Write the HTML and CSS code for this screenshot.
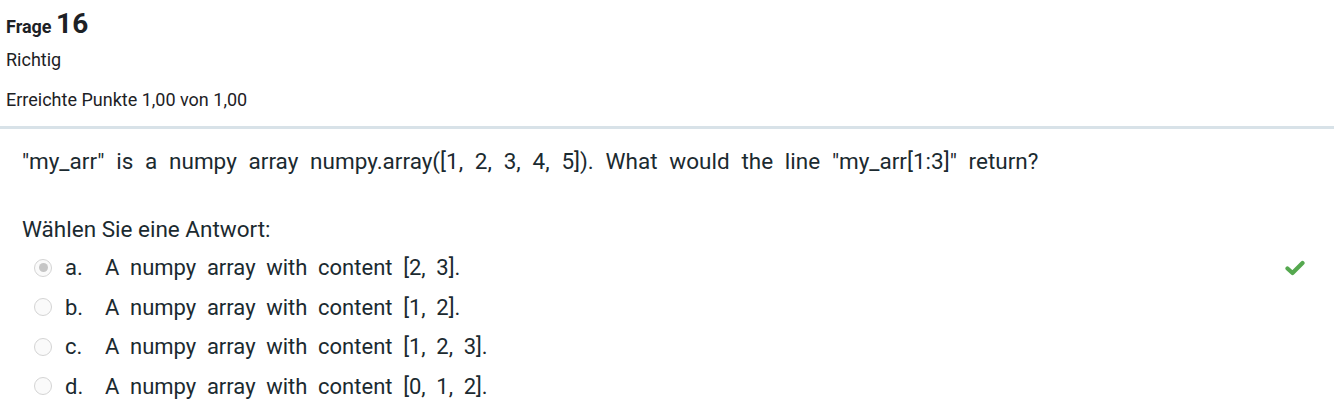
FILE: index.html
```html
<!DOCTYPE html>
<html lang="de">
<head>
<meta charset="utf-8">
<link rel="stylesheet" href="styles.css">
</head>
<body>
<div class="que">
  <div class="info">
    <h3 class="no">Frage <span class="qno">16</span></h3>
    <div class="state">Richtig</div>
    <div class="grade">Erreichte Punkte 1,00 von 1,00</div>
  </div>
  <div class="content">
    <div class="qtext">"my_arr" is a numpy array numpy.array([1, 2, 3, 4, 5]). What would the line "my_arr[1:3]" return?</div>
    <div class="prompt">Wählen Sie eine Antwort:</div>
    <div class="answer">
      <div class="opt">
        <span class="radio checked"></span>
        <span class="letter">a.</span>
        <span class="text">A numpy array with content [2, 3].</span>
        <svg class="check" viewBox="0 0 20 16" width="20" height="16"><path d="M2.5 8.5 L7.5 13 L17.5 3" fill="none" stroke="#55a84f" stroke-width="4.2" stroke-linecap="round" stroke-linejoin="round"/></svg>
      </div>
      <div class="opt">
        <span class="radio"></span>
        <span class="letter">b.</span>
        <span class="text">A numpy array with content [1, 2].</span>
      </div>
      <div class="opt">
        <span class="radio"></span>
        <span class="letter">c.</span>
        <span class="text">A numpy array with content [1, 2, 3].</span>
      </div>
      <div class="opt">
        <span class="radio"></span>
        <span class="letter">d.</span>
        <span class="text">A numpy array with content [0, 1, 2].</span>
      </div>
    </div>
  </div>
</div>
</body>
</html>
```
FILE: styles.css
```css
html, body {
  margin: 0;
  padding: 0;
  background: #ffffff;
}
body {
  font-family: Roboto, "Liberation Sans", sans-serif;
  color: #1d2125;
}
.info {
  padding: 8px 6px 0 6px;
  height: 129px;
  box-sizing: border-box;
  border-bottom: 3px solid #d8e2e8;
}
.no {
  margin: 0;
  font-size: 18px;
  font-weight: 700;
  line-height: 32px;
  height: 34px;
}
.qno {
  font-size: 28px;
}
.state {
  font-size: 18px;
  line-height: 22px;
  margin-top: 7px;
}
.grade {
  font-size: 18px;
  line-height: 22px;
  margin-top: 18px;
}
.content {
  padding: 17px 29px 0 22px;
  color: #1b2a30;
}
.qtext {
  font-size: 22.5px;
  line-height: 30px;
  word-spacing: 6.2px;
}
.prompt {
  font-size: 22.5px;
  line-height: 30px;
  margin-top: 38px;
}
.answer {
  margin-top: 4px;
}
.opt {
  display: flex;
  align-items: center;
  height: 39.5px;
  font-size: 22px;
}
.radio {
  width: 18px;
  height: 18px;
  box-sizing: border-box;
  border: 1px solid #d4d4d4;
  border-radius: 50%;
  background: #fafafa;
  margin-left: 12px;
  margin-right: 13px;
  position: relative;
}
.radio.checked::after {
  content: "";
  position: absolute;
  left: 3.5px;
  top: 3.5px;
  width: 9px;
  height: 9px;
  border-radius: 50%;
  background: #c6c6c6;
}
.letter {
  width: 40px;
}
.text {
  word-spacing: 5.2px;
  flex: 1;
}
```
